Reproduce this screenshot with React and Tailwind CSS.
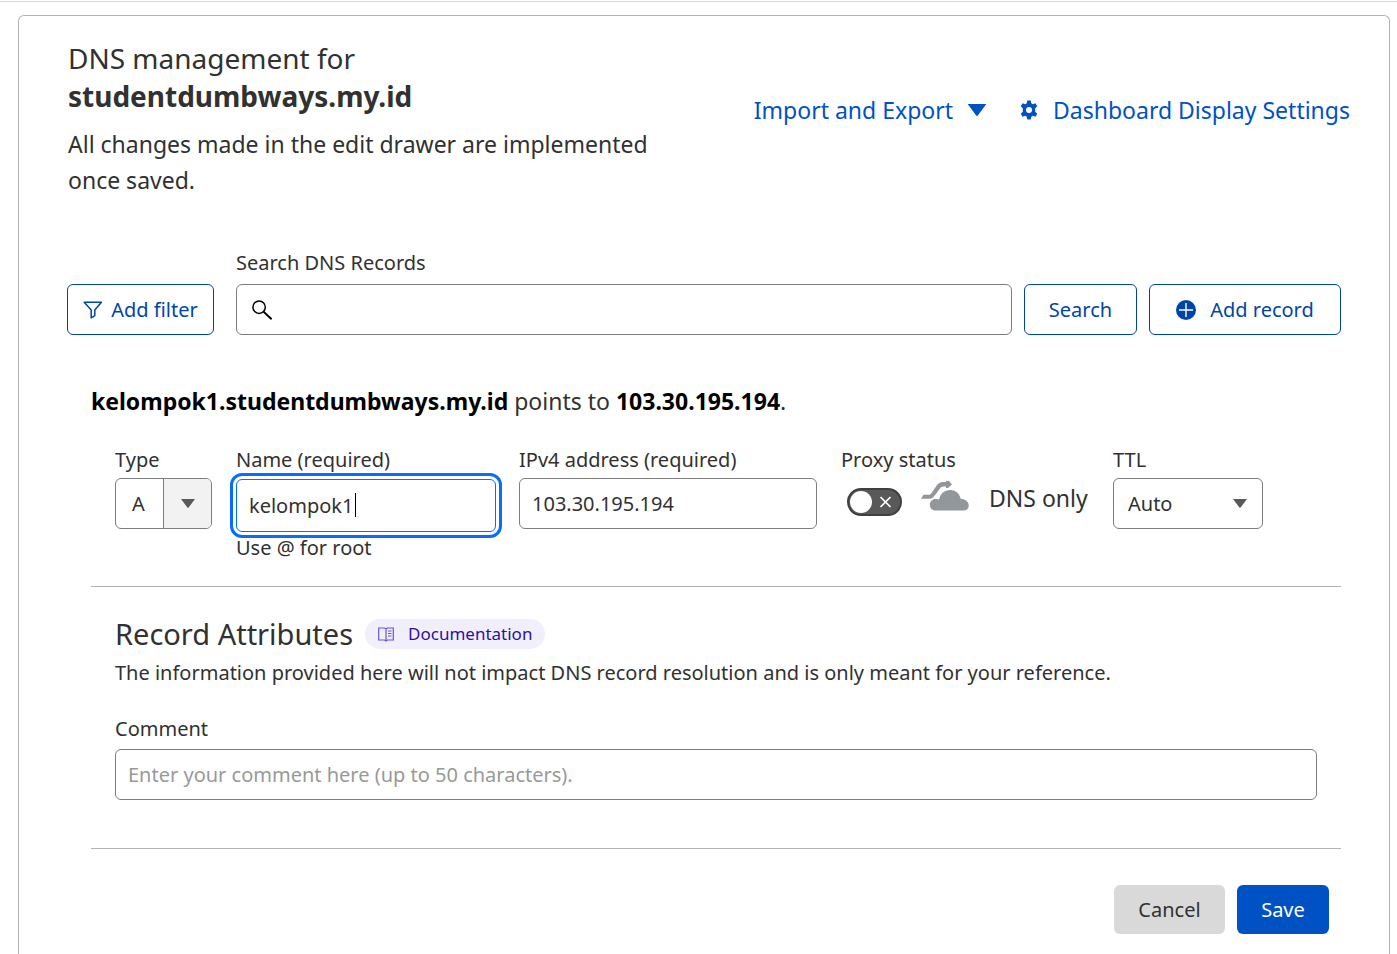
import React, { useState } from "react";

function Caret({ className }) {
  return (
    <svg viewBox="0 0 14 9" className={className} fill="currentColor" aria-hidden="true">
      <path d="M0 0h14L7.6 8.6a.8.8 0 0 1-1.2 0z" />
    </svg>
  );
}

function GearIcon() {
  return (
    <svg viewBox="0 0 20 20" className="h-5 w-5 shrink-0" fill="currentColor" aria-hidden="true">
      <path
        fillRule="evenodd"
        d="M8.300.6h3.400l.6 2.700 1.500.9 2.700-.9 1.700 3-2 1.900v3.600l2 1.900-1.700 3-2.700-.9-1.500.9-.6 2.700H8.300l-.6-2.700-1.500-.9-2.700.9-1.700-3 2-1.900V8.200l-2-1.900 1.700-3 2.700.9 1.500-.9zM10 7a3 3 0 1 0 0 6 3 3 0 0 0 0-6z"
      />
    </svg>
  );
}

function FilterIcon() {
  return (
    <svg viewBox="0 0 20 18" className="h-[18px] w-5 shrink-0" fill="none" stroke="currentColor" strokeWidth="1.5" strokeLinejoin="round" aria-hidden="true">
      <path d="M1.2 1.2h17.2L11.8 9v5.6l-3.6 2.2V9z" />
    </svg>
  );
}

function SearchIcon({ className }) {
  return (
    <svg viewBox="0 0 20 20" className={className} fill="none" stroke="currentColor" strokeWidth="1.5" aria-hidden="true">
      <circle cx="7.1" cy="7.2" r="6.2" />
      <path d="M11.6 11.7l8 7.5" strokeWidth="1.9" />
    </svg>
  );
}

function PlusIcon() {
  return (
    <svg viewBox="0 0 20 20" className="h-5 w-5 shrink-0" aria-hidden="true">
      <circle cx="10" cy="10" r="10" fill="currentColor" />
      <path d="M10 3v14M3 10h14" stroke="#fff" strokeWidth="1.4" />
    </svg>
  );
}

function CloudIcon() {
  return (
    <svg viewBox="0 0 48 30" className="h-[30px] w-12 shrink-0" fill="#92979b" aria-hidden="true">
      <path d="M14 29.500a5.600 5.600 0 0 1-5.200-5.700c0-3.400 2.700-5.900 6-5.900.9 0 1.700.1 2.500.5.300-.200.600-.300 1-.400C19 12.900 23.700 9 29.400 9c5.300 0 9.200 3.500 10.300 8.800 4.300.2 8 2.800 8 6.700 0 2.900-1.700 5-4.700 5z" />
      <path d="M0 17.800l2.500-4h4.800c1.500 0 2.300-.6 3.300-1.900l4.700-6.900C17.500 2 19.200 1 22 1h3V0h3l3 3.500-4 3.500h-2V5.500h-2.500c-1.700 0-2.600.7-3.700 2.200l-4.700 6.200c-2 2.700-3.700 3.900-6.800 3.900z" />
    </svg>
  );
}

function BookIcon() {
  return (
    <svg viewBox="0 0 16 15" className="h-[15px] w-4 shrink-0" fill="none" stroke="#6355d8" strokeWidth="1.2" aria-hidden="true">
      <path d="M.7 1h5.800L8 1.800 9.500 1h5.800v12H9.500L8 14l-1.500-1H.7zM8 1.800V14M10 4h3.500M10 6.500h3.500M10 9h3.500" />
    </svg>
  );
}

const label = "block text-[20px] leading-7 text-[#313131] whitespace-nowrap";
const box = "h-[51px] rounded-md border border-[#7d7d7d] bg-white text-[20px] text-[#313131]";
const outlined = "flex h-[51px] items-center justify-center rounded-md border border-[#0045a6] bg-white text-[20px] text-[#0045a6] whitespace-nowrap";

export default function App() {
  const [proxied, setProxied] = useState(false);
  return (
    <div className="flex min-h-screen flex-col bg-white font-['Noto_Sans',sans-serif] text-[#313131]">
      <div className="mt-px h-px bg-[#d9d9d9]" />
      <main className="mt-[13px] mr-[7px] ml-[18px] grow rounded-t-md border border-b-0 border-[#b3b3b3] pb-5">
        <header className="flex items-start justify-between pt-[23px] pr-[39px] pl-[49px]">
          <div className="max-w-[600px]">
            <h1 className="text-[28px] leading-[38px]">
              DNS management for
              <br />
              <strong className="font-bold">studentdumbways.my.id</strong>
            </h1>
            <p className="mt-[11px] text-[23px] leading-9">All changes made in the edit drawer are implemented once saved.</p>
          </div>
          <nav className="flex items-center gap-8 pt-[53px] text-[23px] leading-9 whitespace-nowrap text-[#0051c3]">
            <button type="button" className="flex items-center gap-[14px]">
              Import and Export
              <Caret className="h-3 w-5" />
            </button>
            <a href="#display-settings" className="flex items-center gap-[14px]">
              <GearIcon />
              Dashboard Display Settings
            </a>
          </nav>
        </header>

        <form className="mt-[51px] flex items-end gap-3 pr-12 pl-12" onSubmit={(e) => e.preventDefault()}>
          <button type="button" className={outlined + " mr-[10px] w-[147px] gap-2"}>
            <FilterIcon />
            Add filter
          </button>
          <div className="grow">
            <label htmlFor="search" className={label}>Search DNS Records</label>
            <div className="relative mt-[7px]">
              <SearchIcon className="pointer-events-none absolute top-4 left-4 h-5 w-5 text-black" />
              <input id="search" type="text" className={box + " w-full pr-3 pl-12"} />
            </div>
          </div>
          <button type="submit" className={outlined + " w-[113px]"}>Search</button>
          <button type="button" className={outlined + " w-48 gap-[14px]"}>
            <PlusIcon />
            Add record
          </button>
        </form>

        <form className="mt-12 pr-12 pl-[72px]" onSubmit={(e) => e.preventDefault()}>
          <p className="text-[23px] leading-9">
            <strong className="font-bold text-black">kelompok1.studentdumbways.my.id</strong> points to{" "}
            <strong className="font-bold text-black">103.30.195.194</strong>.
          </p>

          <div className="mt-[27px] flex items-start px-6">
            <div className="mr-6 w-[97px] shrink-0">
              <label htmlFor="type" className={label}>Type</label>
              <div className="relative mt-1">
                <select id="type" className={box + " w-full appearance-none pl-4"}>
                  <option>A</option>
                </select>
                <span className="pointer-events-none absolute inset-y-px right-px flex w-12 items-center justify-center rounded-r-[5px] border-l border-[#7d7d7d] bg-[#f2f2f2]">
                  <Caret className="h-[9px] w-[14px] text-[#595959]" />
                </span>
              </div>
            </div>
            <div className="mr-[23px] w-[260px]">
              <label htmlFor="name" className={label}>Name (required)</label>
              <div className="relative mt-[5px]">
                <input
                  id="name"
                  type="text"
                  defaultValue="kelompok1"
                  className="h-[53px] w-full rounded-md border border-[#056dff] bg-white pr-3 pl-3 text-[20px] text-[#313131] caret-transparent outline-[3px] outline-offset-[3px] outline-[#056dff] outline-solid"
                />
                <span className="pointer-events-none absolute top-[14px] left-[119px] h-6 w-px bg-black" />
              </div>
              <p className="mt-[2px] text-[20px] leading-7 whitespace-nowrap">Use @ for root</p>
            </div>
            <div className="mr-6 w-[298px]">
              <label htmlFor="address" className={label}>IPv4 address (required)</label>
              <input id="address" type="text" defaultValue="103.30.195.194" className={box + " mt-1 w-full px-3"} />
            </div>
            <div className="mr-6 w-[248px]">
              <label htmlFor="proxy" className={label}>Proxy status</label>
              <div className="mt-[2px] flex h-[51px] items-center pl-[6px]">
                <span className="relative flex h-7 w-[55px] shrink-0">
                  <input
                    id="proxy"
                    type="checkbox"
                    role="switch"
                    checked={proxied}
                    onChange={(e) => setProxied(e.target.checked)}
                    className="h-7 w-[55px] appearance-none rounded-full border-2 border-[#404040] bg-[#595959] checked:bg-[#f6821f]"
                  />
                  <svg viewBox="0 0 55 28" className="pointer-events-none absolute inset-0" aria-hidden="true">
                    <circle cx={proxied ? 41 : 14} cy="14" r="11" fill="#fff" />
                    {!proxied && <path d="M33.500 9l10 10M43.500 9l-10 10" stroke="#fff" strokeWidth="1.700" />}
                  </svg>
                </span>
                <span className="mb-3 ml-[19px]">
                  <CloudIcon />
                </span>
                <span className="mb-2 ml-5 text-[23px] leading-9 whitespace-nowrap">DNS only</span>
              </div>
            </div>
            <div className="w-[150px]">
              <label htmlFor="ttl" className={label}>TTL</label>
              <div className="relative mt-1">
                <select id="ttl" className={box + " w-full appearance-none pl-[14px]"}>
                  <option>Auto</option>
                </select>
                <Caret className="pointer-events-none absolute top-[21px] right-4 h-[9px] w-[14px] text-[#595959]" />
              </div>
            </div>
          </div>

          <hr className="mt-6 border-[#b3b3b3]" />

          <section className="px-6">
            <div className="mt-7 flex items-center gap-3">
              <h2 className="text-[29px] leading-[38px]">Record Attributes</h2>
              <a href="#documentation" className="flex h-[30px] items-center gap-[14px] rounded-full bg-[#f2effd] px-[13px] text-[17px] text-[#2c0fa3]">
                <BookIcon />
                Documentation
              </a>
            </div>
            <p className="mt-[6px] text-[20px] leading-7">
              The information provided here will not impact DNS record resolution and is only meant for your reference.
            </p>
            <label htmlFor="comment" className={label + " mt-7"}>Comment</label>
            <input
              id="comment"
              type="text"
              placeholder="Enter your comment here (up to 50 characters)."
              className={box + " mt-[6px] w-full px-3 placeholder:text-[#999999]"}
            />
          </section>

          <hr className="mt-12 border-[#b3b3b3]" />

          <div className="mt-9 flex justify-end gap-3 pr-3">
            <button type="button" className="h-[49px] w-[111px] rounded-md bg-[#d9d9d9] text-[20px]">Cancel</button>
            <button type="submit" className="h-[49px] w-[92px] rounded-md bg-[#0051c3] text-[20px] text-white">Save</button>
          </div>
        </form>
      </main>
    </div>
  );
}
